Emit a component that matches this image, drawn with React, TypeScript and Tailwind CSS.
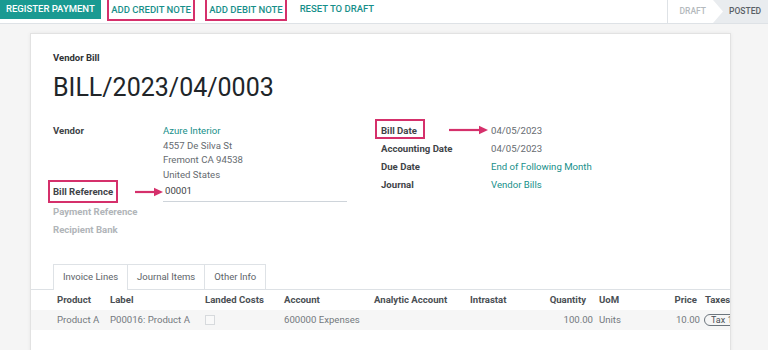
import React from "react";

const TEAL = "text-[#178f8a]";

const Arrow = ({ width, className }: { width: number; className: string }) => (
  <svg
    className={className}
    width={width}
    height={10}
    viewBox={`0 0 ${width} 10`}>
    <line x1={0} y1={5} x2={width - 8} y2={5} stroke="#d5306b" strokeWidth={2.2} />
    <polygon points={`${width - 9},0.8 ${width},5 ${width - 9},9.2`} fill="#d5306b" />
  </svg>
);

const Field = ({
  label,
  children,
  muted,
}: {
  label: string;
  children?: React.ReactNode;
  muted?: boolean;
}) => (
  <div className="flex h-[18px] items-center">
    <div className={`w-[110px] font-bold ${muted ? "text-[#b1b5b9]" : "text-[#3f4448]"}`}>{label}</div>
    <div className="flex-1">{children}</div>
  </div>
);

const columns = [
  { key: "product", label: "Product", w: "w-[53px]", align: "text-left pl-[4px]" },
  { key: "label", label: "Label", w: "w-[95px]", align: "text-left pl-[4px]" },
  { key: "landed", label: "Landed Costs", w: "w-[79px]", align: "text-left pl-[4px]" },
  { key: "account", label: "Account", w: "w-[90px]", align: "text-left pl-[4px]" },
  { key: "analytic", label: "Analytic Account", w: "w-[96px]", align: "text-left pl-[4px]" },
  { key: "intrastat", label: "Intrastat", w: "w-[74px]", align: "text-left pl-[4px]" },
  { key: "qty", label: "Quantity", w: "w-[55px]", align: "text-right pr-[9px]" },
  { key: "uom", label: "UoM", w: "w-[55px]", align: "text-left pl-[4px]" },
  { key: "price", label: "Price", w: "w-[52px]", align: "text-right pr-[5px]" },
  { key: "taxes", label: "Taxes", w: "w-[60px]", align: "text-left pl-[3px]" },
];

export default function App() {
  return (
    <div className="h-[350px] w-[768px] overflow-hidden bg-[#f5f5f5] font-['Roboto','Liberation_Sans',sans-serif]">
      {/* control panel */}
      <div className="flex h-[24px] items-start justify-between border-b border-[#dee2e6] bg-white">
        <div className="flex items-start text-[9.5px] font-medium">
          <button className="h-[19px] bg-[#1a9a92] px-[6px] uppercase text-white">Register Payment</button>
          <button className={`-mt-[2px] ml-[6px] h-[23px] border-2 border-[#d5306b] px-[2.5px] pt-[2px] uppercase ${TEAL}`}>
            Add Credit Note
          </button>
          <button className={`-mt-[2px] ml-[10px] h-[23px] border-2 border-[#d5306b] px-[2px] pt-[2px] uppercase ${TEAL}`}>
            Add Debit Note
          </button>
          <button className={`ml-[13px] h-[19px] uppercase ${TEAL}`}>Reset to Draft</button>
        </div>
        <div className="flex h-[23px] text-[8.5px] font-medium uppercase">
          <div className="relative flex items-center border-l border-[#dee2e6] bg-white pl-[12px] pr-[7px] text-[#b4b9bd]">
            Draft
            <svg
              className="absolute left-full top-0 z-10"
              width={10}
              height={23}
              viewBox="0 0 10 23">
              <polygon points="0,0 10,11.5 0,23" fill="#ffffff" />
            </svg>
          </div>
          <div className="flex items-center bg-[#e9ecef] pl-[16px] pr-[7px] text-[#5a6066]">Posted</div>
        </div>
      </div>

      {/* sheet */}
      <div className="ml-[30px] mt-[9px] h-[340px] w-[701px] overflow-hidden border border-[#e2e2e2] bg-white text-[9.6px] shadow-[0_0_4px_rgba(0,0,0,0.06)]">
        <div className="px-[22px] pt-[17px]">
          <div className="text-[9.5px] font-bold leading-[14px] text-[#2f3336]">Vendor Bill</div>
          <div className="mt-[8px] text-[25px] leading-[30px] text-[#212529]">BILL/2023/04/0003</div>

          <div className="mt-[21px] flex">
            {/* left group */}
            <div className="w-[328px]">
              <div className="flex leading-[14.5px]">
                <div className="w-[110px] font-bold text-[#3f4448]">Vendor</div>
                <div className="text-[#666b70]">
                  <div className={TEAL}>Azure Interior</div>
                  <div>4557 De Silva St</div>
                  <div>Fremont CA 94538</div>
                  <div>United States</div>
                </div>
              </div>
              <div className="flex h-[20px] items-center">
                <div className="relative w-[110px] font-bold text-[#3f4448]">
                  Bill Reference
                  <div className="absolute -left-[5px] -top-[5px] h-[23px] w-[70px] border-2 border-[#d5306b]" />
                </div>
                <div className="relative flex h-[20px] w-[184px] items-center border-b border-[#ced4da] pl-[2px] text-[#3f4448]">
                  <Arrow width={28} className="absolute -left-[28px] top-[5px]" />
                  00001
                </div>
              </div>
              <div className="h-[1px]" />
              <Field label="Payment Reference" muted />
              <Field label="Recipient Bank" muted />
            </div>

            {/* right group */}
            <div className="-mt-[2px]">
              <div className="flex h-[18px] items-center">
                <div className="relative w-[110px] font-bold text-[#3f4448]">
                  Bill Date
                  <div className="absolute -left-[6px] -top-[5px] h-[20px] w-[50px] border-2 border-[#d5306b]" />
                </div>
                <div className="relative text-[#666b70]">
                  <Arrow width={39} className="absolute -left-[42px] top-[1px]" />
                  04/05/2023
                </div>
              </div>
              <Field label="Accounting Date">
                <span className="text-[#666b70]">04/05/2023</span>
              </Field>
              <Field label="Due Date">
                <span className={TEAL}>End of Following Month</span>
              </Field>
              <Field label="Journal">
                <span className={TEAL}>Vendor Bills</span>
              </Field>
            </div>
          </div>
        </div>

        {/* notebook */}
        <div className="mt-[25px]">
          <div className="flex border-b border-[#dee2e6] pl-[22px] text-[9.5px] text-[#5d6368]">
            <div className="-mb-[1px] flex h-[26px] items-center border border-b-0 border-[#dee2e6] bg-white px-[9px]">
              Invoice Lines
            </div>
            <div className="flex h-[25px] items-center border-t border-r border-[#dee2e6] px-[9px]">
              Journal Items
            </div>
            <div className="flex h-[25px] items-center border-t border-r border-[#dee2e6] px-[9px]">Other Info</div>
          </div>

          <div className="w-[760px]">
            <div className="flex h-[20px] items-center pl-[22px] font-bold text-[#4a4f54] shadow-[0_1px_2px_rgba(0,0,0,0.06)]">
              {columns.map((c) => (
                <div key={c.key} className={`${c.w} shrink-0 whitespace-nowrap ${c.align}`}>
                  {c.label}
                </div>
              ))}
            </div>
            <div className="flex h-[20px] items-center bg-[#f6f6f6] pl-[22px] text-[#74797e]">
              <div className="w-[53px] shrink-0 whitespace-nowrap pl-[4px]">Product A</div>
              <div className="w-[95px] shrink-0 whitespace-nowrap pl-[4px]">P00016: Product A</div>
              <div className="w-[79px] shrink-0 pl-[4px]">
                <div className="h-[10px] w-[10px] border border-[#d7dadd] bg-[#f9f9f9]" />
              </div>
              <div className="w-[90px] shrink-0 whitespace-nowrap pl-[4px]">600000 Expenses</div>
              <div className="w-[96px] shrink-0" />
              <div className="w-[74px] shrink-0" />
              <div className="w-[55px] shrink-0 pr-[2px] text-right">100.00</div>
              <div className="w-[55px] shrink-0 pl-[4px]">Units</div>
              <div className="w-[52px] shrink-0 pr-[2px] text-right">10.00</div>
              <div className="w-[60px] shrink-0 pl-[2px]">
                <span className="rounded-full border border-[#6c757d] px-[6px] text-[9px] leading-[11px] text-[#495057]">
                  Tax 15%
                </span>
              </div>
            </div>
          </div>
        </div>
      </div>
    </div>
  );
}
